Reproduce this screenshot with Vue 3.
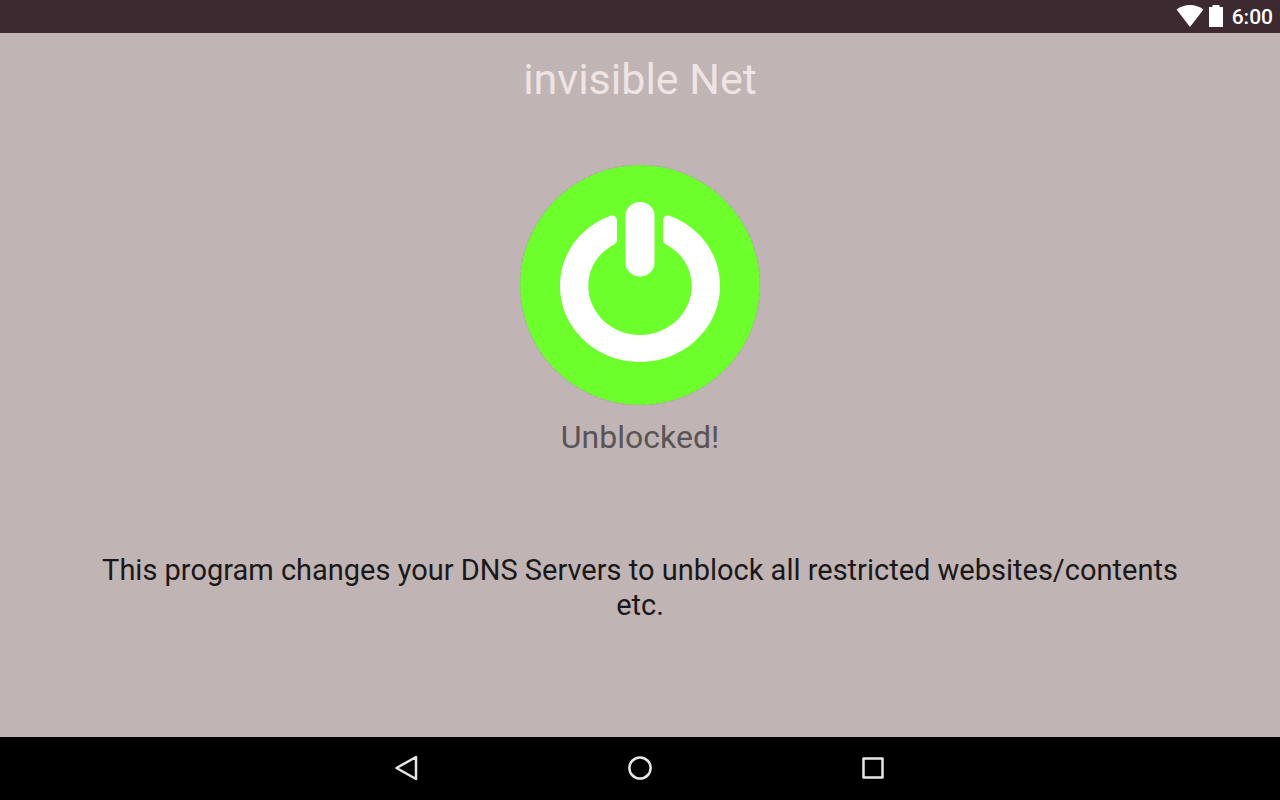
<script setup>
import { ref, computed, onMounted, onUnmounted } from 'vue'

const time = ref('6:00')
const unblocked = ref(true)

const status = computed(() => (unblocked.value ? 'Unblocked!' : 'Blocked!'))

function toggle() {
  unblocked.value = !unblocked.value
}

// Space bar toggles too, even when the button has no focus
function onKey(ev) {
  if (ev.code === 'Space' && ev.target === document.body) toggle()
}

onMounted(() => window.addEventListener('keydown', onKey))
onUnmounted(() => window.removeEventListener('keydown', onKey))
</script>

<template>
  <div class="screen">
    <header class="status-bar">
      <svg class="wifi" width="28" height="22" viewBox="0 0 28 22" aria-hidden="true">
        <path d="M14 22 L0.6 4.6 Q6.5 0 14 0 T27.4 4.6 Z" />
      </svg>
      <svg class="battery" width="14" height="22" viewBox="0 0 14 22" aria-hidden="true">
        <path d="M3.5 0h7v2H14v20H0V2h3.5z" />
      </svg>
      <span class="clock">{{ time }}</span>
    </header>

    <main class="content">
      <h1 class="title">invisible Net</h1>

      <button
        type="button"
        class="power"
        :class="{ off: !unblocked }"
        :aria-pressed="unblocked"
        aria-label="Power"
        @click="toggle"
      >
        <svg viewBox="0 0 240 240" aria-hidden="true">
          <circle class="disc" cx="120" cy="120" r="120" />
          <circle class="rim" cx="120" cy="120" r="120" />
          <path
            class="mark"
            d="M90 51 C94 49.5 97 52 97 56 V74.5 C97 77 96.3 78.3 94 79.5
               C78 88 68.3 103 68.3 121 C68.3 148 91.5 170 120 170
               C148.5 170 171.7 148 171.7 121 C171.7 103 162 88 146 79.5
               C143.7 78.3 143 77 143 74.5 V56 C143 52 146 49.5 150 51
               C180 62 200 89 200 121 C200 163 164 197 120 197
               C76 197 40 163 40 121 C40 89 60 62 90 51 Z"
          />
          <rect class="mark" x="105.5" y="37" width="29" height="74.5" rx="14.5" ry="13.5" />
        </svg>
      </button>

      <p class="state">{{ status }}</p>
      <p class="about">
        This program changes your DNS Servers to unblock all restricted websites/contents etc.
      </p>
    </main>

    <nav class="nav-bar">
      <button type="button" aria-label="Back">
        <svg width="30" height="30" viewBox="0 0 30 30"><path d="M4.5 15 L24 4 V26 Z" /></svg>
      </button>
      <button type="button" aria-label="Home">
        <svg width="30" height="30" viewBox="0 0 30 30"><circle cx="15" cy="15" r="10.6" /></svg>
      </button>
      <button type="button" aria-label="Recent apps">
        <svg width="30" height="30" viewBox="0 0 30 30"><rect x="5.5" y="5.5" width="19" height="19" /></svg>
      </button>
    </nav>
  </div>
</template>

<style>
body {
  margin: 0;
}
</style>

<style scoped>
.screen {
  display: flex;
  flex-direction: column;
  min-height: 100vh;
  background: #c0b4b4;
  font-family: Roboto, 'Liberation Sans', sans-serif;
}

button {
  padding: 0;
  border: 0;
  background: none;
  cursor: pointer;
}

.status-bar {
  display: flex;
  align-items: center;
  justify-content: flex-end;
  height: 33px;
  padding-right: 7px;
  background: #3c2a30;
  color: #fff;
}
.wifi,
.battery {
  margin-bottom: 1px;
  fill: #fff;
}
.battery {
  margin-left: 5px;
  margin-right: 9px;
}
.clock {
  padding-top: 2px;
  font-size: 21px;
  font-weight: 500;
  line-height: 25px;
}

.content {
  flex: 1;
  display: flex;
  flex-direction: column;
  align-items: center;
  padding: 21px 96px;
  text-align: center;
}

.title {
  margin: 0 0 61px;
  color: #efe4e4;
  font-size: 43px;
  font-weight: 400;
  line-height: 50px;
}

.power {
  width: 240px;
  height: 240px;
  border-radius: 50%;
}
.power svg {
  display: block;
  width: 100%;
  height: 100%;
}
.disc {
  fill: #6cff2c;
}
.off .disc {
  fill: #e53935;
}
.rim {
  fill: none;
  stroke: #a0a09a;
  stroke-width: 1;
  stroke-dasharray: 5 2;
  opacity: 0.6;
}
.mark {
  fill: #fff;
}

.state {
  margin: 13px 0 97px;
  color: #5a5454;
  font-size: 32px;
  line-height: 38px;
}

.about {
  margin: 0;
  color: #1a1818;
  font-size: 29px;
  line-height: 35px;
}

.nav-bar {
  display: flex;
  justify-content: center;
  gap: 133px;
  height: 62px;
  padding-bottom: 1px;
  background: #000;
}
.nav-bar button {
  display: flex;
  align-items: center;
  justify-content: center;
  width: 100px;
}
.nav-bar svg {
  fill: none;
  stroke: #e6e6e6;
  stroke-width: 2.5;
  stroke-linejoin: round;
}
</style>
